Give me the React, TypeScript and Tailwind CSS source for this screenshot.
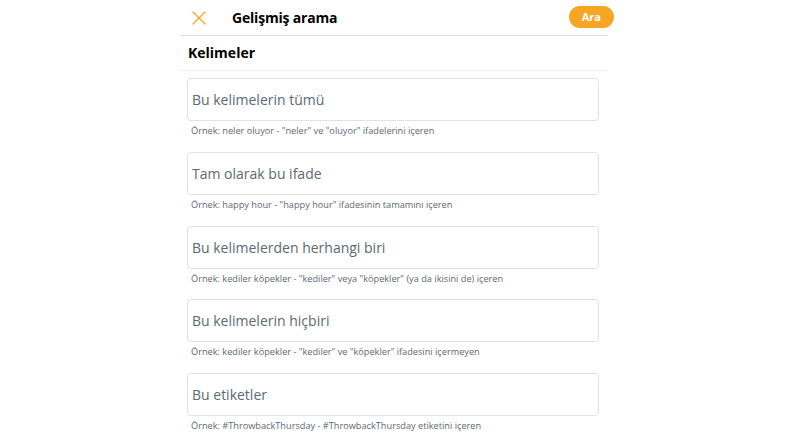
import { X } from 'lucide-react';

type Field = {
  placeholder: string;
  hint: string;
};

const fields: Field[] = [
  { placeholder: 'Bu kelimelerin tümü', hint: 'Örnek: neler oluyor - "neler" ve "oluyor" ifadelerini içeren' },
  { placeholder: 'Tam olarak bu ifade', hint: 'Örnek: happy hour - "happy hour" ifadesinin tamamını içeren' },
  { placeholder: 'Bu kelimelerden herhangi biri', hint: 'Örnek: kediler köpekler - "kediler" veya "köpekler" (ya da ikisini de) içeren' },
  { placeholder: 'Bu kelimelerin hiçbiri', hint: 'Örnek: kediler köpekler - "kediler" ve "köpekler" ifadesini içermeyen' },
  { placeholder: 'Bu etiketler', hint: 'Örnek: #ThrowbackThursday - #ThrowbackThursday etiketini içeren' },
];

export default function App() {
  return (
    <div className="min-h-screen bg-white font-['Open_Sans','Noto_Sans',sans-serif] text-[#14171a]">
      <div className="mx-auto w-[428px]">
        {/* header */}
        <div className="flex h-[36px] items-center border-b border-[#e1e4e6]">
          <button className="ml-[7px] flex h-[24px] w-[24px] items-center justify-center text-[#f6a623]">
            <X className="h-[24px] w-[24px]" strokeWidth={1.3} />
          </button>
          <h1 className="ml-[21px] text-[14px] font-bold leading-none tracking-[-0.2px] text-black">Gelişmiş arama</h1>
          <button className="ml-auto -mr-[6px] mb-[1px] h-[22px] rounded-full bg-[#f6a623] px-[13px] text-[11px] font-bold text-white">
            Ara
          </button>
        </div>

        {/* section title */}
        <div className="flex h-[35px] items-center border-b border-[#eef0f2] pl-[8px]">
          <h2 className="text-[14px] font-bold leading-none text-black">Kelimeler</h2>
        </div>

        <div className="flex flex-col pt-[7px]">
          {fields.map((f) => (
            <div key={f.placeholder} className="ml-[7px] h-[73.8px] w-[412px]">
              <input
                type="text"
                placeholder={f.placeholder}
                className="h-[43px] w-full rounded-[4px] border border-[#dfe3e6] px-[4px] text-[14px] text-[#14171a] outline-none placeholder:text-[#5c6973]"
              />
              <p className="mt-[2px] pl-[4px] text-[9.2px] leading-[16px] text-[#5c6973]">{f.hint}</p>
            </div>
          ))}
        </div>
      </div>
    </div>
  );
}
